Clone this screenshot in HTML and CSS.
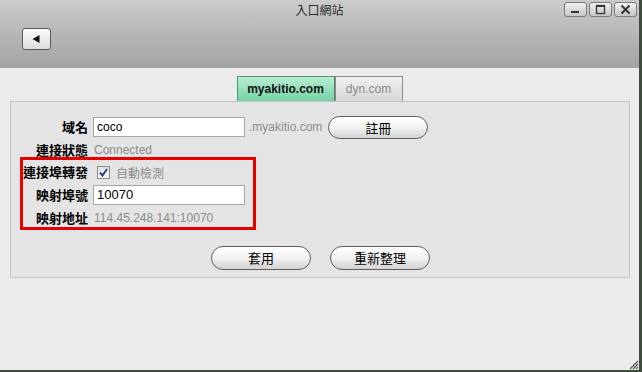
FILE: index.html
```html
<!DOCTYPE html>
<html lang="zh-Hant">
<head>
<meta charset="utf-8">
<title>入口網站</title>
<link rel="stylesheet" href="styles.css">
</head>
<body>
<div class="window">
  <div class="header">
    <div class="titlebar">
      <div></div>
      <div class="title">入口網站</div>
      <div class="controls">
        <span class="ctl"><svg width="23" height="15" viewBox="0 0 23 15"><rect x="7" y="9" width="8" height="2" fill="#333"/></svg></span>
        <span class="ctl"><svg width="23" height="15" viewBox="0 0 23 15"><rect x="7.5" y="3.5" width="8" height="8" fill="none" stroke="#333" stroke-width="1.3"/><rect x="7.5" y="3.5" width="8" height="1.5" fill="#333"/></svg></span>
        <span class="ctl"><svg width="23" height="15" viewBox="0 0 23 15"><path d="M7.5 3.5 L15.5 11.5 M15.5 3.5 L7.5 11.5" stroke="#333" stroke-width="2"/></svg></span>
      </div>
    </div>
    <div class="back"><svg width="29" height="22" viewBox="0 0 29 22"><path d="M10.5 11 L17.5 7 L17.5 15 Z" fill="#111"/></svg></div>
  </div>
  <div class="content">
    <div class="tabs">
      <div class="tab active">myakitio.com</div>
      <div class="tab">dyn.com</div>
    </div>
    <div class="panel">
      <div class="form">
        <div class="label">域名</div>
        <div class="field">
          <span class="input">coco</span>
          <span class="muted suffix">.myakitio.com</span>
          <span class="btn reg">註冊</span>
        </div>
        <div class="label">連接狀態</div>
        <div class="field"><span class="muted">Connected</span></div>
        <div class="label">連接埠轉發</div>
        <div class="field">
          <span class="check"><svg width="13" height="13" viewBox="0 0 13 13"><path d="M3 6.5 L5.5 9.5 L10 3" fill="none" stroke="#27458a" stroke-width="2"/></svg></span>
          <span class="muted cjk">自動檢測</span>
        </div>
        <div class="label">映射埠號</div>
        <div class="field"><span class="input port">10070</span></div>
        <div class="label">映射地址</div>
        <div class="field"><span class="muted">114.45.248.141:10070</span></div>
      </div>
      <div class="actions">
        <span class="btn">套用</span>
        <span class="btn">重新整理</span>
      </div>
      <div class="highlight"></div>
    </div>
  </div>
  <svg class="grip" width="12" height="12" viewBox="0 0 12 12"><path d="M11 3 L3 11 M11 6 L6 11 M11 9 L9 11" stroke="#555" stroke-width="1.2"/></svg>
</div>
</body>
</html>
```

FILE: styles.css
```css
html, body {
  margin: 0;
  padding: 0;
}
body {
  width: 642px;
  height: 372px;
  overflow: hidden;
  font-family: "Liberation Sans", Arial, "Noto Sans CJK TC", sans-serif;
  font-size: 12px;
  color: #000;
}
.window {
  position: relative;
  box-sizing: border-box;
  width: 642px;
  height: 372px;
  background: #ebebeb;
  border-right: 3px solid #3e4b3c;
  border-bottom: 2px solid #3e4b3c;
}
.header {
  height: 68px;
  background: linear-gradient(#cbcbcb, #a2a2a2);
}
.titlebar {
  display: grid;
  grid-template-columns: 1fr auto 1fr;
  align-items: start;
  height: 20px;
}
.title {
  padding-top: 3px;
  font-family: "Noto Sans CJK TC", sans-serif;
  font-size: 12px;
  line-height: 14px;
  color: #2a2a2a;
}
.controls {
  display: flex;
  justify-content: flex-end;
  gap: 2px;
  padding: 2px 2px 0 0;
}
.ctl {
  display: block;
  box-sizing: border-box;
  width: 23px;
  height: 15px;
  border: 1px solid #7a7a7a;
  border-radius: 3px;
  background: linear-gradient(#f2f2f2, #c4c4c4);
  overflow: hidden;
}
.ctl svg {
  display: block;
  margin: -1px 0 0 -1px;
}
.back {
  box-sizing: border-box;
  width: 29px;
  height: 22px;
  margin: 8px 0 0 22px;
  border: 1px solid #5a5a5a;
  border-radius: 3px;
  background: linear-gradient(#fbfbfb, #dcdcdc);
  overflow: hidden;
}
.back svg {
  display: block;
  margin: -1px 0 0 -1px;
}
.content {
  padding-top: 8px;
}
.tabs {
  display: flex;
  justify-content: center;
}
.tab {
  box-sizing: border-box;
  height: 26px;
  line-height: 24px;
  border: 1px solid #8c8c8c;
  background: linear-gradient(#f0f0f0, #d6d6d6);
  color: #8a8a8a;
  width: 68px;
  text-align: center;
}
.tab.active {
  width: 98px;
  border-color: #4d9577;
  border-right-color: #5a7a6a;
  background: linear-gradient(#b9ecd3, #73d3a6);
  color: #111;
  font-weight: bold;
}
.panel {
  position: relative;
  margin: -1px 9px 0 10px;
  border: 1px solid #c6c6c6;
  background: #e4e4e4;
  padding: 13px 0 7px 0;
}
.form {
  display: grid;
  grid-template-columns: 77px auto;
  grid-template-rows: 24px 22px 22px 24px 21px;
  column-gap: 5px;
  align-items: center;
}
.label {
  text-align: right;
  font-family: "Noto Sans CJK TC", sans-serif;
  font-weight: bold;
  font-size: 13px;
  line-height: 16px;
}
.field {
  display: flex;
  align-items: center;
}
.input {
  box-sizing: border-box;
  width: 152px;
  height: 20px;
  padding-left: 3px;
  line-height: 18px;
  border: 1px solid #a5a5a5;
  background: #fff;
  font-size: 12px;
}
.input.port {
  font-size: 13px;
}
.muted {
  color: #8c8c8c;
  padding-left: 1px;
}
.suffix {
  margin-left: 3px;
}
.cjk {
  font-family: "Noto Sans CJK TC", sans-serif;
  font-size: 12px;
  margin-left: 5px;
}
.check {
  box-sizing: border-box;
  width: 13px;
  height: 13px;
  margin-left: 4px;
  border: 1px solid #8a8a8a;
  background: linear-gradient(#e0e0e0, #fff);
  overflow: hidden;
}
.check svg {
  display: block;
  margin: -1px 0 0 -1px;
}
.btn {
  display: block;
  box-sizing: border-box;
  width: 100px;
  height: 24px;
  line-height: 22px;
  text-align: center;
  border: 1px solid #5e5e5e;
  border-radius: 12px;
  background: linear-gradient(#ffffff 0%, #f2f2f2 50%, #d2d2d2 100%);
  font-family: "Noto Sans CJK TC", sans-serif;
  font-size: 13px;
  color: #000;
}
.btn.reg {
  margin-left: 6px;
  height: 23px;
  line-height: 21px;
}
.actions {
  display: flex;
  justify-content: center;
  gap: 19px;
  margin-top: 18px;
  margin-left: 1px;
}
.highlight {
  position: absolute;
  left: 9px;
  top: 55px;
  width: 230px;
  height: 67px;
  border: 3px solid #e60000;
}
.grip {
  position: absolute;
  right: 0;
  bottom: 0;
}
```
